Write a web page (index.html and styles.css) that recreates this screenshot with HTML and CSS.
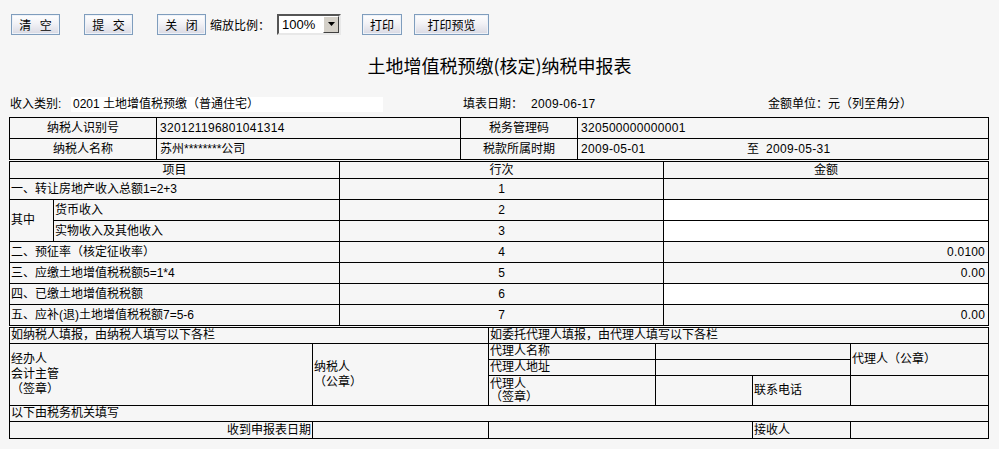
FILE: index.html
```html
<!DOCTYPE html>
<html lang="zh-CN">
<head>
<meta charset="utf-8">
<title>土地增值税预缴(核定)纳税申报表</title>
<link rel="stylesheet" href="styles.css">
</head>
<body>
<div class="toolbar">
  <button class="btn btn-w" type="button">清 空</button>
  <button class="btn btn-w gap25" type="button">提 交</button>
  <button class="btn btn-w gap25" type="button">关 闭</button>
  <span class="zoom-label">缩放比例：</span>
  <div class="zoom-select">
    <span class="zs-val">100%</span>
    <span class="zs-btn"><svg width="7" height="4" viewBox="0 0 7 4"><path d="M0 0h7L3.5 4z" fill="#000"/></svg></span>
  </div>
  <button class="btn btn-print" type="button">打印</button>
  <button class="btn btn-preview" type="button">打印预览</button>
</div>

<h1 class="title">土地增值税预缴(核定)纳税申报表</h1>

<div class="sheet">
  <div class="meta">
    <span>收入类别:</span>
    <span class="meta-box">0201 土地增值税预缴（普通住宅）</span>
    <span></span>
    <span>填表日期：</span>
    <span class="num">2009-06-17</span>
    <span>金额单位：元（列至角分）</span>
  </div>

  <table class="grid t1">
    <colgroup><col style="width:147px"><col style="width:304px"><col style="width:117px"><col></colgroup>
    <tr>
      <td class="c">纳税人识别号</td>
      <td class="v num">320121196801041314</td>
      <td class="c">税务管理码</td>
      <td class="v num">320500000000001</td>
    </tr>
    <tr>
      <td class="c">纳税人名称</td>
      <td class="v">苏州********公司</td>
      <td class="c">税款所属时期</td>
      <td class="v num"><span class="from">2009-05-01</span><span class="to">至</span>2009-05-31</td>
    </tr>
  </table>

  <table class="grid t2">
    <colgroup><col style="width:44px"><col style="width:286px"><col style="width:324px"><col></colgroup>
    <tr class="head">
      <td colspan="2" class="c">项目</td>
      <td class="c">行次</td>
      <td class="c">金额</td>
    </tr>
    <tr>
      <td colspan="2">一、转让房地产收入总额1=2+3</td>
      <td class="c">1</td>
      <td class="amt"></td>
    </tr>
    <tr>
      <td rowspan="2">其中</td>
      <td>货币收入</td>
      <td class="c">2</td>
      <td class="amt input"></td>
    </tr>
    <tr>
      <td>实物收入及其他收入</td>
      <td class="c">3</td>
      <td class="amt input"></td>
    </tr>
    <tr>
      <td colspan="2">二、预征率（核定征收率）</td>
      <td class="c">4</td>
      <td class="amt">0.0100</td>
    </tr>
    <tr>
      <td colspan="2">三、应缴土地增值税税额5=1*4</td>
      <td class="c">5</td>
      <td class="amt">0.00</td>
    </tr>
    <tr>
      <td colspan="2">四、已缴土地增值税税额</td>
      <td class="c">6</td>
      <td class="amt input"></td>
    </tr>
    <tr>
      <td colspan="2">五、应补(退)土地增值税税额7=5-6</td>
      <td class="c">7</td>
      <td class="amt">0.00</td>
    </tr>
  </table>

  <table class="grid t3">
    <colgroup><col style="width:303px"><col style="width:176px"><col style="width:167px"><col style="width:97px"><col style="width:98px"><col></colgroup>
    <tr>
      <td colspan="2">如纳税人填报，由纳税人填写以下各栏</td>
      <td colspan="4">如委托代理人填报，由代理人填写以下各栏</td>
    </tr>
    <tr>
      <td rowspan="3" class="ml">经办人<br>会计主管<br>（签章）</td>
      <td rowspan="3" class="ml">纳税人<br>（公章）</td>
      <td>代理人名称</td>
      <td colspan="2"></td>
      <td rowspan="2">代理人（公章）</td>
    </tr>
    <tr>
      <td>代理人地址</td>
      <td colspan="2"></td>
    </tr>
    <tr class="tall">
      <td>代理人<br>（签章）</td>
      <td></td>
      <td>联系电话</td>
      <td></td>
    </tr>
    <tr>
      <td colspan="6">以下由税务机关填写</td>
    </tr>
    <tr class="last">
      <td class="r">收到申报表日期</td>
      <td></td>
      <td colspan="2"></td>
      <td>接收人</td>
      <td></td>
    </tr>
  </table>
</div>
</body>
</html>
```
FILE: styles.css
```css
html, body {
  margin: 0;
  padding: 0;
  background: #f6f6f6;
}
body {
  font-family: "Liberation Sans", "Noto Sans CJK SC", sans-serif;
  font-size: 12px;
  color: #000;
}

/* toolbar */
.toolbar {
  display: flex;
  align-items: center;
  height: 21px;
  padding: 14px 0 0 11px;
}
.btn {
  height: 21px;
  padding: 0;
  margin: 0;
  border: 1px solid #7f9dbd;
  box-shadow: inset 0 0 0 1px #eef2f8;
  background: linear-gradient(#ffffff 0%, #f2f2f6 45%, #d9d9e3 100%);
  font-family: "Noto Sans CJK SC", sans-serif;
  font-size: 12px;
  color: #000;
  line-height: 17px;
}
.btn-w { width: 49px; letter-spacing: 3px; text-indent: 3px; }
.gap25 { margin-left: 24px; }
.zoom-label {
  margin-left: 4px;
  width: 67px;
  font-family: "Noto Sans CJK SC", sans-serif;
}
.zoom-select {
  display: flex;
  align-items: stretch;
  box-sizing: border-box;
  width: 64px;
  height: 21px;
  background: #fff;
  border: 2px solid;
  border-color: #555 #e8e8e8 #e8e8e8 #555;
  margin-top: -1px;
}
.zs-val {
  flex: 1;
  padding-left: 3px;
  line-height: 17px;
  font-size: 13px;
}
.zs-btn {
  box-sizing: border-box;
  width: 16px;
  background: #d4d0c8;
  border: 1px solid;
  border-color: #fff #404040 #404040 #fff;
  display: flex;
  align-items: center;
  justify-content: center;
}
.btn-print { width: 40px; margin-left: 21px; }
.btn-preview { width: 75px; margin-left: 12px; }

/* title */
.title {
  margin: 18px 0 0 0;
  height: 24px;
  line-height: 24px;
  text-align: center;
  font-family: "Noto Sans CJK SC", sans-serif;
  font-size: 18px;
  font-weight: normal;
}

/* sheet */
.sheet {
  margin-left: 9px;
  width: 980px;
}
.meta {
  display: grid;
  grid-template-columns: 62px 312px 80px 68px 237px auto;
  height: 15px;
  line-height: 15px;
  margin-top: 20px;
  margin-bottom: 5px;
}
.meta > span:first-child { padding-left: 1px; }
.meta-box {
  background: #fff;
  padding-left: 2px;
}
.num { letter-spacing: 0.3px; }

.grid {
  width: 980px;
  border-collapse: collapse;
  table-layout: fixed;
}
.grid td {
  border: 1px solid #000;
  padding: 0 0 0 1px;
  vertical-align: middle;
  white-space: nowrap;
  overflow: hidden;
}
.grid td.c { text-align: center; padding: 0; }
.grid td.r { text-align: right; padding: 0 1px 0 0; }
.grid td.v { padding-left: 3px; }

.t1 { border: 1px solid #000; }
.t1 td { height: 20px; line-height: 15px; }
.from { display: inline-block; width: 166px; }
.to { display: inline-block; width: 19px; letter-spacing: 0; }

.t2 { border: 1px solid #000; margin-top: 1px; }
.t2 td { height: 20px; line-height: 15px; }
.t2 tr.head td { height: 16px; }
.t2 td.amt { text-align: right; padding-right: 3px; letter-spacing: 0.2px; }
.t2 td.input { background: #fff; }

.t3 { border: 1px solid #000; margin-top: 1px; }
.t3 td { height: 15px; line-height: 15px; }
.t3 td.ml { line-height: 15px; }
.t3 tr.tall td { height: 29px; line-height: 13px; }
.t3 tr.last td { height: 16px; }
```
